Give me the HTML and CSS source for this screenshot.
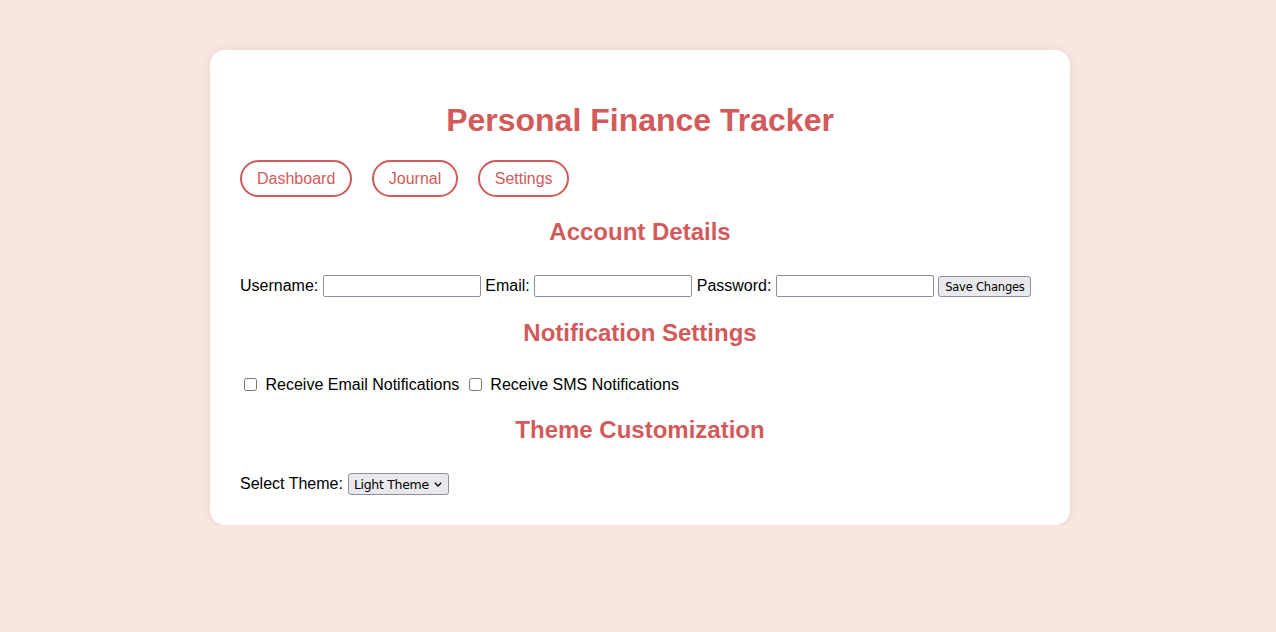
FILE: index.html
```html
<!DOCTYPE html>
<html lang="en">
<head>
<meta charset="utf-8">
<title>Personal Finance Tracker</title>
<link rel="stylesheet" href="styles.css">
</head>
<body>
<div class="page">
  <div class="card">
    <h1 class="title">Personal Finance Tracker</h1>
    <nav class="nav">
      <a class="nav-btn" href="#">Dashboard</a>
      <a class="nav-btn" href="#">Journal</a>
      <a class="nav-btn" href="#">Settings</a>
    </nav>
    <section class="section">
      <h2 class="section-title">Account Details</h2>
      <form class="row row-account">
        <label>Username:</label><input class="field" type="text"><label>Email:</label><input class="field" type="email"><label>Password:</label><input class="field" type="password"><button class="btn" type="button">Save Changes</button>
      </form>
    </section>
    <section class="section">
      <h2 class="section-title">Notification Settings</h2>
      <div class="row row-check">
        <input class="check" type="checkbox"><label>Receive Email Notifications</label><input class="check" type="checkbox"><label>Receive SMS Notifications</label>
      </div>
    </section>
    <section class="section">
      <h2 class="section-title">Theme Customization</h2>
      <div class="row row-theme">
        <label>Select Theme:</label>
        <span class="select-wrap">
          <select class="select"><option>Light Theme</option><option>Dark Theme</option></select>
          <svg class="chevron" width="8" height="5" viewBox="0 0 8 5" aria-hidden="true"><path d="M0.8 0.8 L4 4 L7.2 0.8" fill="none" stroke="#000" stroke-width="1.3"/></svg>
        </span>
      </div>
    </section>
  </div>
</div>
</body>
</html>
```

FILE: styles.css
```css
html, body {
  margin: 0;
  padding: 0;
}
body {
  background: #f8e6e0;
  font-family: "Liberation Sans", Arial, sans-serif;
  font-size: 16px;
  color: #000;
}
.page {
  padding: 50px 0 0 4px;
}
.card {
  box-sizing: border-box;
  width: 860px;
  margin: 0 auto;
  background: #fff;
  border-radius: 15px;
  padding: 30px;
  box-shadow: 0 0 10px rgba(0, 0, 0, 0.08);
}
.title {
  margin: 22px 0 21px;
  text-align: center;
  font-size: 32px;
  line-height: 37px;
  font-weight: bold;
  color: #d35a5a;
}
.nav {
  display: flex;
  gap: 20px;
}
.nav-btn {
  display: inline-block;
  border: 2px solid #d35a5a;
  border-radius: 20px;
  padding: 8px 14.5px 8px 15px;
  line-height: 17px;
  color: #d35a5a;
  text-decoration: none;
  font-size: 16px;
}
.section-title {
  margin: 21px 0 29px;
  text-align: center;
  font-size: 24px;
  line-height: 28px;
  font-weight: bold;
  color: #d35a5a;
}
.row {
  display: flex;
  align-items: center;
  gap: 4.5px;
  margin: 0;
  line-height: 18px;
}
.row-account {
  height: 23px;
  align-items: flex-start;
}
.row-account label {
  line-height: 22px;
}
.row-check {
  box-sizing: border-box;
  height: 19px;
  padding-bottom: 2px;
  gap: 5.5px;
}
.row-theme {
  height: 22px;
}
.field {
  box-sizing: border-box;
  width: 158px;
  height: 22px;
  margin: 0;
  border: 1px solid #8f8f9d;
  border-radius: 2px;
  padding: 1px 2px;
  font-size: 13px;
}
.btn {
  box-sizing: border-box;
  width: 93px;
  height: 21px;
  margin: 1px 0 0;
  padding: 0 4px;
  border: 1px solid #8f8f9d;
  border-radius: 3px;
  background: #e9e9ed;
  font-family: "DejaVu Sans", sans-serif;
  font-size: 11.5px;
  letter-spacing: -0.2px;
  color: #000;
  white-space: nowrap;
}
.check {
  box-sizing: border-box;
  width: 13px;
  height: 13px;
  margin: 3px 3px 3px 4px;
  flex: none;
}
.select-wrap {
  position: relative;
  display: inline-flex;
  margin-left: 0.5px;
}
.select {
  -webkit-appearance: none;
  appearance: none;
  box-sizing: border-box;
  width: 101px;
  height: 22px;
  margin: 0;
  padding: 0 4px 0 5px;
  border: 1px solid #8f8f9d;
  border-radius: 3px;
  background: #e9e9ed;
  font-family: "DejaVu Sans", sans-serif;
  font-size: 12.5px;
  letter-spacing: -0.3px;
  color: #000;
}
.chevron {
  position: absolute;
  right: 7px;
  top: 9px;
  pointer-events: none;
}
```
